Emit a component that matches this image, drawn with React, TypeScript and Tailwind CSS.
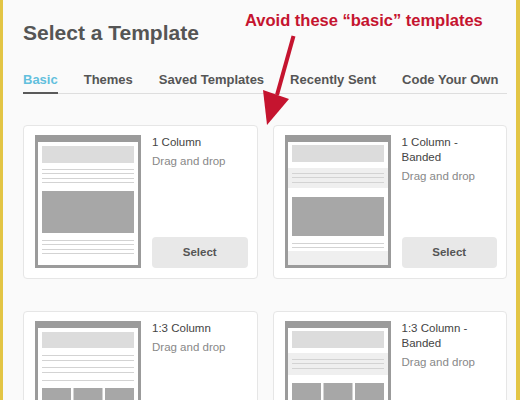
type Variant = "one" | "oneBanded" | "three" | "threeBanded";

const TABS = ["Basic", "Themes", "Saved Templates", "Recently Sent", "Code Your Own"];

const TEMPLATES: { name: string; variant: Variant }[] = [
  { name: "1 Column", variant: "one" },
  { name: "1 Column - Banded", variant: "oneBanded" },
  { name: "1:3 Column", variant: "three" },
  { name: "1:3 Column - Banded", variant: "threeBanded" },
];

const LINE = "#d3d3d3";
const BAND = "#efefef";
const DARK = "#a7a7a7";

function Lines({ ys }: { ys: number[] }) {
  return (
    <>
      {ys.map((y) => (
        <rect key={y} x="7" y={y} width="92" height="1" fill={LINE} />
      ))}
    </>
  );
}

function Blocks({ y }: { y: number }) {
  return (
    <>
      <rect x="7" y={y} width="29" height="40" fill={DARK} />
      <rect x="38.5" y={y} width="29" height="40" fill={DARK} />
      <rect x="70" y={y} width="29" height="40" fill={DARK} />
    </>
  );
}

// little wireframe of the email layout
function Thumb({ variant }: { variant: Variant }) {
  return (
    <svg width="106" height="133" viewBox="0 0 106 133" className="block shrink-0">
      <rect width="106" height="133" fill="#9b9b9b" />
      <rect x="3" y="7" width="100" height="123" fill="#fff" />
      {variant === "one" && (
        <>
          <rect x="7" y="11" width="92" height="17" fill="#dcdcdc" />
          <Lines ys={[34, 38, 43, 47]} />
          <rect x="7" y="56" width="92" height="42" fill={DARK} />
          <Lines ys={[105, 109, 114, 118]} />
        </>
      )}
      {variant === "oneBanded" && (
        <>
          <rect x="7" y="10" width="92" height="17" fill="#dcdcdc" />
          <rect x="3" y="33" width="100" height="20" fill={BAND} />
          <Lines ys={[38, 42, 47]} />
          <rect x="7" y="62" width="92" height="39" fill={DARK} />
          <Lines ys={[108, 112]} />
          <rect x="3" y="116" width="100" height="14" fill={BAND} />
        </>
      )}
      {variant === "three" && (
        <>
          <rect x="7" y="11" width="92" height="16" fill="#dcdcdc" />
          <Lines ys={[34, 39, 46, 51, 59]} />
          <Blocks y={67} />
          <Lines ys={[114, 118, 123]} />
        </>
      )}
      {variant === "threeBanded" && (
        <>
          <rect x="7" y="10" width="92" height="17" fill="#dcdcdc" />
          <rect x="3" y="32" width="100" height="22" fill={BAND} />
          <Lines ys={[38, 42, 47]} />
          <Blocks y={62} />
          <rect x="3" y="108" width="100" height="22" fill={BAND} />
          <Lines ys={[113, 118]} />
        </>
      )}
    </svg>
  );
}

function TemplateCard({ name, variant }: { name: string; variant: Variant }) {
  return (
    <div className="flex gap-[11px] rounded-sm border border-[#e6e6e6] bg-white pt-[9px] pr-[9px] pb-[10px] pl-[11px]">
      <Thumb variant={variant} />
      <div className="flex min-w-0 flex-1 flex-col">
        <p className="text-[11.5px] leading-[15px] text-[#444]">{name}</p>
        <p className="mt-[4px] text-[11.5px] leading-[15px] text-[#888]">Drag and drop</p>
        <button className="mt-auto h-[31px] w-full rounded-sm bg-[#e8e8e8] text-[11.5px] font-bold text-[#555]">
          Select
        </button>
      </div>
    </div>
  );
}

export default function App() {
  return (
    <div className="relative min-h-[400px] w-[520px] border-r-[4px] border-l-[3px] border-[#e3c545] bg-[#fafafa] pr-[9px] pb-8 pl-[20px] font-['Liberation_Sans',Arial,sans-serif]">
      <h1 className="pt-[21px] text-[21px] leading-[24px] font-bold text-[#555]">Select a Template</h1>

      <nav className="mt-[27px] flex gap-[26px] border-b border-[#dedede]">
        {TABS.map((t, i) => (
          <span
            key={t}
            className={
              i === 0
                ? "-mb-px border-b-2 border-[#5a5a5a] pb-[4px] text-[13px] leading-[16px] font-bold text-[#62c0dd]"
                : "-mb-px border-b-2 border-transparent pb-[4px] text-[13px] leading-[16px] font-bold text-[#555]"
            }
          >
            {t}
          </span>
        ))}
      </nav>

      <div className="mt-[31px] grid grid-cols-2 gap-x-[15px] gap-y-[32px]">
        {TEMPLATES.map((t) => (
          <TemplateCard key={t.name} name={t.name} variant={t.variant} />
        ))}
      </div>

      {/* annotation overlay */}
      <p className="absolute top-[10px] left-[242px] text-[16.5px] leading-[20px] font-bold whitespace-nowrap text-[#c5142f]">
        Avoid these “basic” templates
      </p>
      <svg className="pointer-events-none absolute top-0 left-0" width="300" height="130" viewBox="3 0 300 130">
        <line x1="293.5" y1="36" x2="277" y2="95" stroke="#c5142f" strokeWidth="4" />
        <polygon points="263,90 289,99 267,125" fill="#c5142f" />
      </svg>
    </div>
  );
}
